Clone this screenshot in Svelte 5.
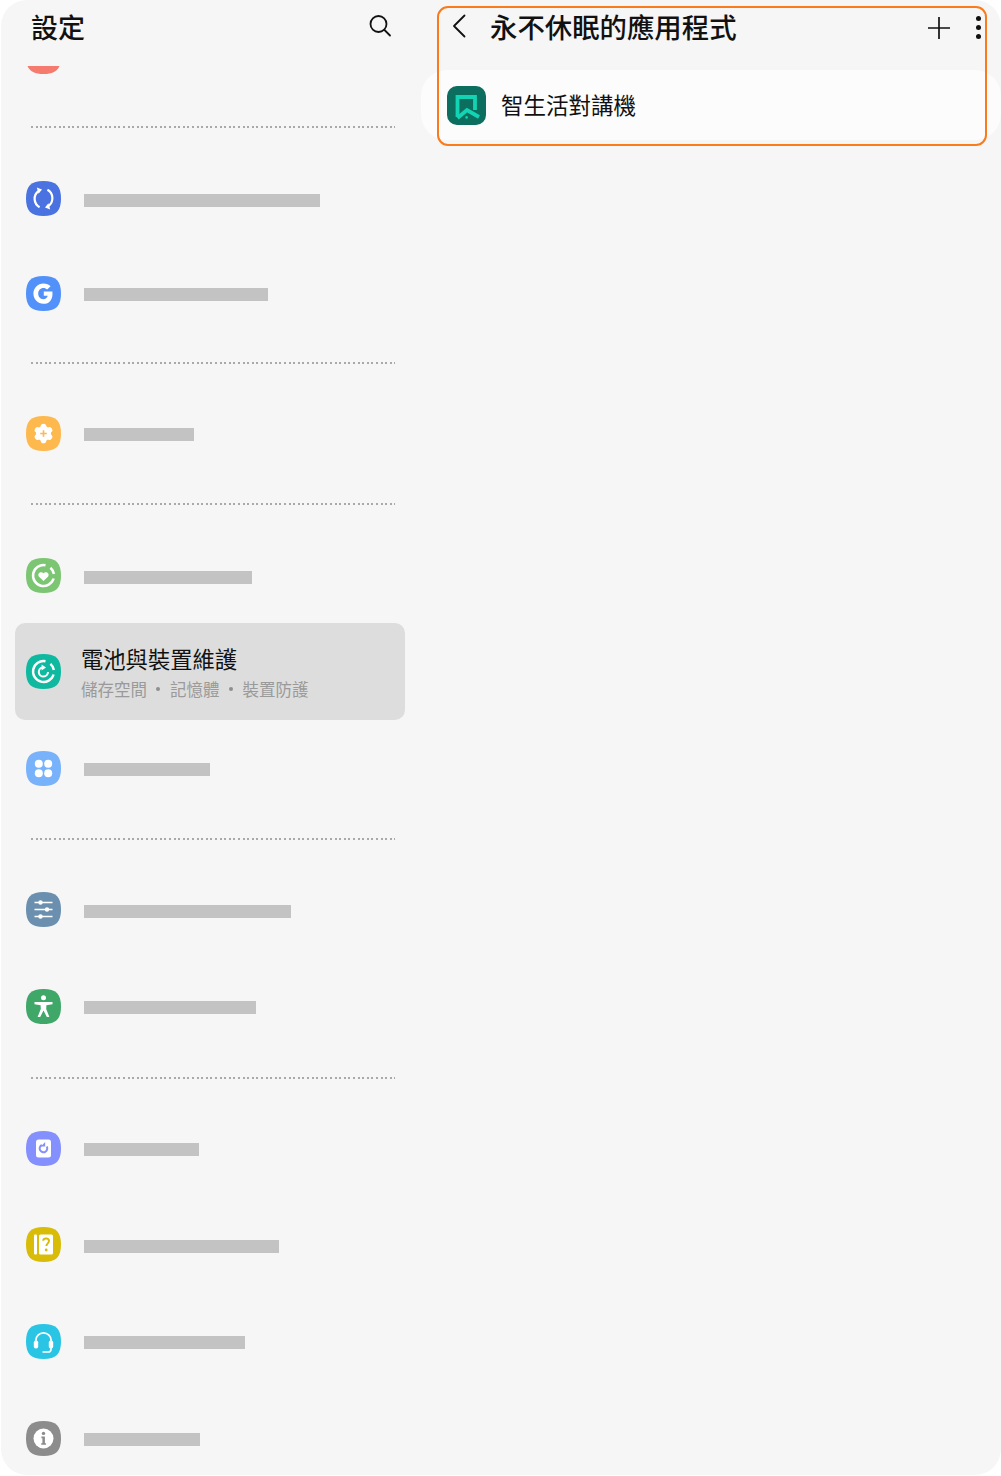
<script>
  const S = [
    { type: "row", icon: "dot", color: "#f57b6e", w: 0, h: 96, dy: 0 },
    { type: "div" },
    { type: "row", icon: "sync", color: "#4a72e0", w: 236, h: 96, dy: 2.5 },
    { type: "row", icon: "google", color: "#5291f9", w: 184, h: 94, dy: 1.5 },
    { type: "div" },
    { type: "row", icon: "gear", color: "#fdb84e", w: 110, h: 95, dy: 1 },
    { type: "div" },
    { type: "row", icon: "care", color: "#7cc573", w: 168, h: 96, dy: 2.5 },
    { type: "active", icon: "device", color: "#0fb9a0" },
    { type: "row", icon: "apps", color: "#78b2fb", w: 126, h: 96, dy: 1.5 },
    { type: "div" },
    { type: "row", icon: "sliders", color: "#6b8fae", w: 207, h: 95, dy: 2 },
    { type: "row", icon: "access", color: "#3fa868", w: 172, h: 98, dy: 1.5 },
    { type: "div" },
    { type: "row", icon: "update", color: "#8490fd", w: 115, h: 95, dy: 1 },
    { type: "row", icon: "manual", color: "#d8bc08", w: 195, h: 97, dy: 2 },
    { type: "row", icon: "headset", color: "#2ac4e4", w: 161, h: 97, dy: 1 },
    { type: "row", icon: "info", color: "#8c8c8c", w: 116, h: 97, dy: 1 }
  ];
  const subItems = ["儲存空間", "記憶體", "裝置防護"];
</script>

{#snippet appIcon(name, color)}
  <svg class="app-icon" width="35" height="35" viewBox="0 0 35 35">
    <path d="M17.5 0C30 0 35 5 35 17.5S30 35 17.5 35 0 30 0 17.5 5 0 17.5 0Z" fill={color} />
    {#if name === "sync"}
      <g fill="none" stroke="#fff" stroke-width="2.2">
        <path d="M13.6 26.2A9.6 9.6 0 0 1 12.6 10" />
        <path d="M21.4 8.8A9.6 9.6 0 0 1 22.4 25" />
      </g>
      <path d="M10.8 6.6 16 8.6 12.6 12.8Z M24.2 28.4 19 26.4 22.4 22.2Z" fill="#fff" />
    {:else if name === "google"}
      <path d="M26.4 15.4H17.8V19.8H21.8C21 22 19.6 23.2 17.4 23.2 14.2 23.2 12.2 20.8 12.2 17.6S14.4 12 17.4 12C19 12 20.2 12.6 21.2 13.6L24.6 10.2C22.8 8.4 20.4 7.4 17.4 7.4 11.8 7.4 7.4 11.8 7.4 17.6S11.8 27.8 17.4 27.8C23.4 27.8 27.2 23.8 26.4 15.4Z" fill="#fff" />
    {:else if name === "gear"}
      <circle cx="17.5" cy="17.5" r="7.6" fill="#fff" />
      <g stroke="#fff" stroke-width="5.6" stroke-linecap="round">
        <path d="M17.5 10.6V24.4" />
        <path d="M11.5 14.05 23.5 20.95" />
        <path d="M11.5 20.95 23.5 14.05" />
      </g>
      <path d="M17.5 14.2V20.8M14.2 17.5H20.8" stroke="#fdb84e" stroke-width="1.6" />
    {:else if name === "care"}
      <g fill="none" stroke="#fff" stroke-width="2.5">
        <path d="M19.5 7.2A10.5 10.5 0 1 0 27.6 20.5" />
        <path d="M24.4 9.8A10.5 10.5 0 0 1 27.9 16" />
      </g>
      <path d="M17.5 23 12.8 18.4C11 15.4 15 12.8 17.5 15.2 20 12.8 24 15.4 22.2 18.4Z" fill="#fff" />
    {:else if name === "device"}
      <g fill="none" stroke="#fff" stroke-width="2.4">
        <path d="M19.5 7.2A10.5 10.5 0 1 0 27.6 20.5" />
        <path d="M24.4 9.8A10.5 10.5 0 0 1 27.9 16" />
        <path d="M22 18A4.6 4.6 0 1 1 16.4 13.4" stroke-width="2" />
      </g>
      <path d="M15.6 10.4 20 13.4 15.6 16.4Z" fill="#fff" />
    {:else if name === "apps"}
      <g fill="#fff">
        <circle cx="12.8" cy="12.8" r="4" /><circle cx="22.2" cy="12.8" r="4" />
        <circle cx="12.8" cy="22.2" r="4" /><circle cx="22.2" cy="22.2" r="4" />
      </g>
    {:else if name === "sliders"}
      <g stroke="#fff" stroke-width="1.5"><path d="M8.5 10.5H26.5M8.5 17.5H26.5M8.5 24.5H26.5" /></g>
      <g fill="#fff"><circle cx="14.5" cy="10.5" r="2.2" /><circle cx="21" cy="17.5" r="2.2" /><circle cx="14.5" cy="24.5" r="2.2" /></g>
    {:else if name === "access"}
      <circle cx="17.5" cy="8.8" r="2.5" fill="#fff" />
      <path d="M8.5 13H26.5V15.2L20.4 16.2 20.2 20 23.4 28H20.8L17.5 21.4 14.2 28H11.6L14.8 20 14.6 16.2 8.5 15.2Z" fill="#fff" />
    {:else if name === "update"}
      <rect x="10" y="8.5" width="15" height="18" rx="2.5" fill="#fff" />
      <path d="M20.8 15.6A3.8 3.8 0 1 1 15.8 14" fill="none" stroke="#8490fd" stroke-width="2" />
      <path d="M19.2 11V15.6H14.8Z" fill="#8490fd" />
    {:else if name === "manual"}
      <rect x="8" y="7.5" width="3" height="20" rx="1" fill="#fff" />
      <rect x="13" y="7.5" width="14" height="20" rx="1.5" fill="#fff" />
      <path d="M17.2 13.8C17.4 10.8 23 10.8 23 14 23 16.4 20.4 16.4 20.4 19" fill="none" stroke="#d8bc08" stroke-width="2" />
      <circle cx="20.2" cy="23" r="1.4" fill="#d8bc08" />
    {:else if name === "headset"}
      <path d="M9.8 18.5V16.5A7.7 7.7 0 0 1 25.2 16.5V18.5" fill="none" stroke="#fff" stroke-width="1.8" />
      <rect x="7.8" y="16.5" width="4.4" height="8" rx="2" fill="#fff" />
      <rect x="22.8" y="16.5" width="4.4" height="8" rx="2" fill="#fff" />
      <path d="M25 24V25.4C25 27 23.8 28 22 28H16.5" fill="none" stroke="#fff" stroke-width="1.6" />
    {:else if name === "info"}
      <circle cx="17.5" cy="17.5" r="10" fill="#fff" />
      <circle cx="17.5" cy="12.4" r="1.7" fill="#8c8c8c" />
      <path d="M15.4 15.6H18.9V22.2H20V23.8H15.2V22.2H16.4V17.2H15.4Z" fill="#8c8c8c" />
    {/if}
  </svg>
{/snippet}

<div class="page">
  <main class="panel">
    <section class="left">
      <header class="left-head">
        <h1>設定</h1>
        <svg class="search" width="24" height="24" viewBox="0 0 24 24" fill="none" stroke="#111" stroke-width="1.8" stroke-linecap="round">
          <circle cx="10.5" cy="10" r="8" />
          <path d="M16.5 16 22 21.5" />
        </svg>
      </header>
      <div class="scroller">
        <div class="list">
          {#each S as item}
            {#if item.type === "div"}
              <div class="divider"></div>
            {:else if item.type === "active"}
              <div class="active">
                {@render appIcon(item.icon, item.color)}
                <div class="active-text">
                  <div class="active-title">電池與裝置維護</div>
                  <div class="active-sub">
                    {#each subItems as sub, i}
                      {#if i > 0}<span class="sep"></span>{/if}
                      <span>{sub}</span>
                    {/each}
                  </div>
                </div>
              </div>
            {:else}
              <div class="row" style="height:{item.h}px">
                {@render appIcon(item.icon, item.color)}
                {#if item.w}
                  <div class="bar" style="width:{item.w}px;margin-top:{item.dy * 2}px"></div>
                {/if}
              </div>
            {/if}
          {/each}
        </div>
      </div>
    </section>

    <section class="right">
      <header class="right-head">
        <svg class="back" width="14" height="24" viewBox="0 0 14 24" fill="none" stroke="#111" stroke-width="1.8" stroke-linecap="round" stroke-linejoin="round">
          <path d="M12.5 1.5 2 12 12.5 22.5" />
        </svg>
        <h2>永不休眠的應用程式</h2>
        <svg class="plus" width="22" height="22" viewBox="0 0 22 22" stroke="#111" stroke-width="1.7">
          <path d="M11 0V22M0 11H22" />
        </svg>
        <div class="kebab"><i></i><i></i><i></i></div>
      </header>
      <div class="card">
        <svg width="39" height="39" viewBox="0 0 39 39">
          <rect width="39" height="39" rx="10" fill="#0b6e5f" />
          <path d="M10.5 31V11H28V24" fill="none" stroke="#12d3b3" stroke-width="3.8" />
          <path d="M10.5 32 20 24 32 31" fill="none" stroke="#12d3b3" stroke-width="3.8" />
          <circle cx="19.6" cy="31.4" r="1.3" fill="#12d3b3" />
        </svg>
        <span class="card-label">智生活對講機</span>
      </div>
    </section>
  </main>
  <div class="callout"></div>
</div>

<style>
  :global(body) {
    background: #fff;
  }

  .page {
    position: relative;
    width: 1001px;
    height: 1476px;
    font-family: "Noto Sans CJK TC", "Noto Sans", sans-serif;
    color: #111;
  }

  .panel {
    display: grid;
    grid-template-columns: 420px 1fr;
    margin-left: 1px;
    height: 1475px;
    border-radius: 26px;
    background: #f6f6f6;
    overflow: hidden;
  }

  .left {
    display: flex;
    flex-direction: column;
    min-height: 0;
  }

  .left-head {
    display: flex;
    justify-content: space-between;
    flex: none;
    height: 66px;
    padding: 0 29px 0 30px;
  }

  h1 {
    margin: 9px 0 0;
    font-size: 27px;
    line-height: 36px;
    font-weight: 500;
  }

  .search {
    margin-top: 14px;
  }

  .scroller {
    flex: 1;
    min-height: 0;
    overflow: hidden;
  }

  .list {
    margin-top: -58px;
  }

  .row {
    display: flex;
    align-items: center;
    padding-left: 24.5px;
  }

  .app-icon {
    flex: none;
    display: block;
  }

  .bar {
    height: 13px;
    margin-left: 23.5px;
    background: #c3c3c3;
  }

  .divider {
    height: 2px;
    margin: 22px 26px 22px 30px;
    background: repeating-linear-gradient(90deg, #a9a9a9 0 2px, transparent 2px 4.6px);
  }

  .active {
    display: flex;
    align-items: center;
    height: 97px;
    margin: 0 16px 0 14px;
    padding-left: 10.5px;
    border-radius: 10px;
    background: #dddddd;
  }

  .active-text {
    margin-left: 20.5px;
  }

  .active-title {
    font-size: 22.3px;
    line-height: 30px;
    margin-top: 1px;
  }

  .active-sub {
    display: flex;
    margin-top: 4px;
    font-size: 16.5px;
    line-height: 24px;
    color: #9a9a9a;
  }

  .sep {
    position: relative;
    width: 23px;
  }

  .sep::after {
    content: "";
    position: absolute;
    left: 9px;
    top: 10px;
    width: 4px;
    height: 4px;
    border-radius: 50%;
    background: #8f8f8f;
  }

  .right {
    display: flex;
    flex-direction: column;
  }

  .right-head {
    display: flex;
    align-items: flex-start;
    flex: none;
    height: 70px;
    padding-left: 31px;
  }

  .back {
    margin-top: 14px;
  }

  h2 {
    margin: 8px 0 0 24px;
    font-size: 27.4px;
    line-height: 36px;
    font-weight: 500;
    white-space: nowrap;
  }

  .plus {
    margin: 17px 0 0 191px;
  }

  .kebab {
    display: flex;
    flex-direction: column;
    gap: 4px;
    margin: 16px 0 0 26px;
  }

  .kebab i {
    display: block;
    width: 5px;
    height: 5px;
    border-radius: 50%;
    background: #111;
  }

  .card {
    display: flex;
    align-items: center;
    height: 70px;
    padding-left: 26px;
    border-radius: 26px;
    background: #fcfcfc;
  }

  .card-label {
    margin-left: 15px;
    margin-top: -2px;
    font-size: 22.5px;
    line-height: 30px;
    white-space: nowrap;
  }

  .callout {
    position: absolute;
    left: 437px;
    top: 6px;
    width: 546px;
    height: 136px;
    border: 2px solid #f97b1c;
    border-radius: 11px;
  }
</style>
